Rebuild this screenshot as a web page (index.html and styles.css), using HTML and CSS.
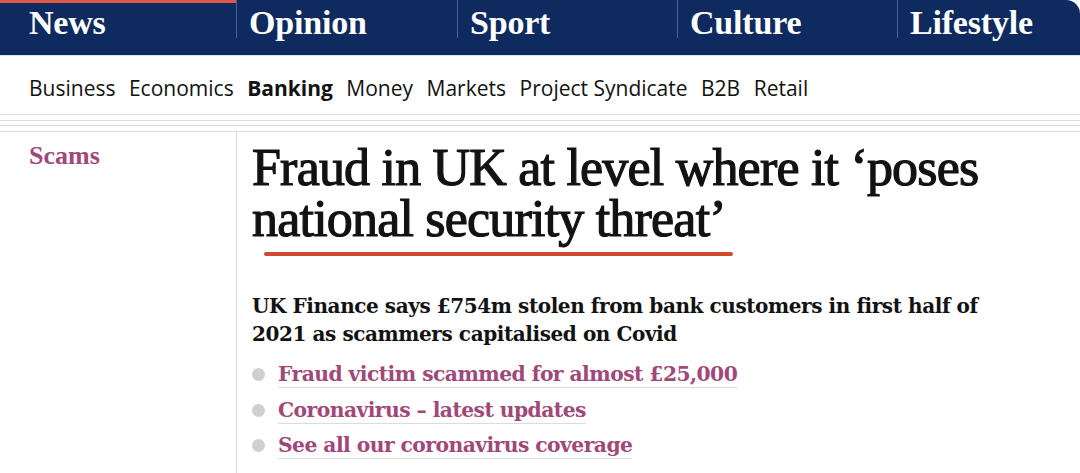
FILE: index.html
```html
<!DOCTYPE html>
<html lang="en">
<head>
<meta charset="utf-8">
<title>Fraud in UK at level where it ‘poses national security threat’</title>
<link rel="stylesheet" href="styles.css">
</head>
<body>
<nav class="pillars">
  <a class="pillar pillar-news is-active" href="#">News</a>
  <a class="pillar" href="#">Opinion</a>
  <a class="pillar" href="#">Sport</a>
  <a class="pillar" href="#">Culture</a>
  <a class="pillar pillar-last" href="#">Lifestyle</a>
</nav>
<nav class="subnav">
  <a href="#">Business</a>
  <a href="#">Economics</a>
  <a href="#" class="is-current">Banking</a>
  <a href="#">Money</a>
  <a href="#">Markets</a>
  <a href="#">Project Syndicate</a>
  <a href="#">B2B</a>
  <a href="#">Retail</a>
</nav>
<div class="rules">
  <div class="rule"></div>
  <div class="rule r2"></div>
  <div class="rule r3"></div>
</div>
<main class="article">
  <aside class="meta">
    <a class="series" href="#">Scams</a>
  </aside>
  <div class="content">
    <h1 class="headline">Fraud in UK at level where it ‘poses national security threat’</h1>
    <p class="standfirst">UK Finance says £754m stolen from bank customers in first half of 2021 as scammers capitalised on Covid</p>
    <ul class="related">
      <li><span class="dot"></span><a href="#">Fraud victim scammed for almost £25,000</a></li>
      <li><span class="dot"></span><a href="#">Coronavirus – latest updates</a></li>
      <li><span class="dot"></span><a href="#">See all our coronavirus coverage</a></li>
    </ul>
  </div>
</main>
</body>
</html>
```
FILE: styles.css
```css
* { box-sizing: border-box; }
html, body { margin: 0; padding: 0; }
body {
  background: #ffffff;
  width: 1080px;
  height: 473px;
  overflow: hidden;
  font-family: "Liberation Serif", Georgia, serif;
  color: #121212;
}
a { text-decoration: none; color: inherit; }

.pillars {
  display: grid;
  grid-template-columns: 236px 221px 220px 220px 1fr;
  height: 55px;
  background: #0e2a5f;
  border-top-right-radius: 14px;
  align-items: start;
}
.pillar {
  display: block;
  height: 38px;
  padding: 3px 0 0 12px;
  border-left: 1px solid #4c6290;
  color: #ffffff;
  font-family: "Liberation Serif", Georgia, serif;
  font-weight: 700;
  font-size: 34px;
  line-height: 40px;
  letter-spacing: -0.2px;
  white-space: nowrap;
}
.pillar-news {
  border-left: none;
  padding-left: 29px;
}
.is-active {
  box-shadow: inset 0 3px 0 #df5a45;
}

.subnav {
  display: flex;
  gap: 13.5px;
  height: 59px;
  padding: 18px 0 0 29px;
  border-top: 1px solid #dfe6f2;
  font-family: "Open Sans", "Noto Sans", sans-serif;
  font-size: 21px;
  line-height: 28px;
  color: #121212;
  white-space: nowrap;
}
.subnav .is-current { font-weight: 700; }

.rules { display: flex; flex-direction: column; }
.rule { height: 1px; background: #dcdcdc; }
.rule.r2 { margin-top: 5px; }
.rule.r3 { margin-top: 4px; }

.article {
  display: grid;
  grid-template-columns: 237px 1fr;
  margin-top: 5px;
  border-top: 1px solid #dcdcdc;
  height: 342px;
}
.meta {
  border-right: 1px solid #dcdcdc;
  padding: 9px 0 0 29px;
}
.series {
  font-family: "Liberation Serif", Georgia, serif;
  font-weight: 700;
  font-size: 26px;
  line-height: 30px;
  color: #a0487a;
}

.content {
  padding: 10px 0 0 15px;
}
.headline {
  position: relative;
  margin: 0;
  max-width: 760px;
  font-family: "Liberation Serif", Georgia, serif;
  font-weight: 400;
  font-size: 52px;
  line-height: 51px;
  letter-spacing: -0.8px;
  color: #121212;
  -webkit-text-stroke: 1.2px #121212;
}
.headline::after {
  content: "";
  position: absolute;
  left: 12px;
  top: 110px;
  width: 469px;
  height: 4px;
  border-radius: 2px;
  background: #cf4a31;
}
.standfirst {
  margin: 48px 0 0;
  max-width: 740px;
  font-family: "DejaVu Serif", "Liberation Serif", serif;
  font-weight: 700;
  font-size: 20px;
  line-height: 28px;
  letter-spacing: -0.42px;
  color: #121212;
}
.related {
  list-style: none;
  margin: 9px 0 0;
  padding: 0;
}
.related li {
  display: flex;
  align-items: center;
  height: 35.5px;
  font-family: "DejaVu Serif", "Liberation Serif", serif;
  font-weight: 700;
  font-size: 20.3px;
  line-height: 35.5px;
  letter-spacing: -0.55px;
}
.dot {
  width: 13px;
  height: 13px;
  border-radius: 50%;
  background: #cfcfcf;
  margin-right: 13px;
  flex: none;
}
.related a {
  color: #a0487a;
  text-decoration: underline;
  text-decoration-color: #dcdcdc;
  text-decoration-thickness: 1px;
  text-underline-offset: 6px;
}
```
